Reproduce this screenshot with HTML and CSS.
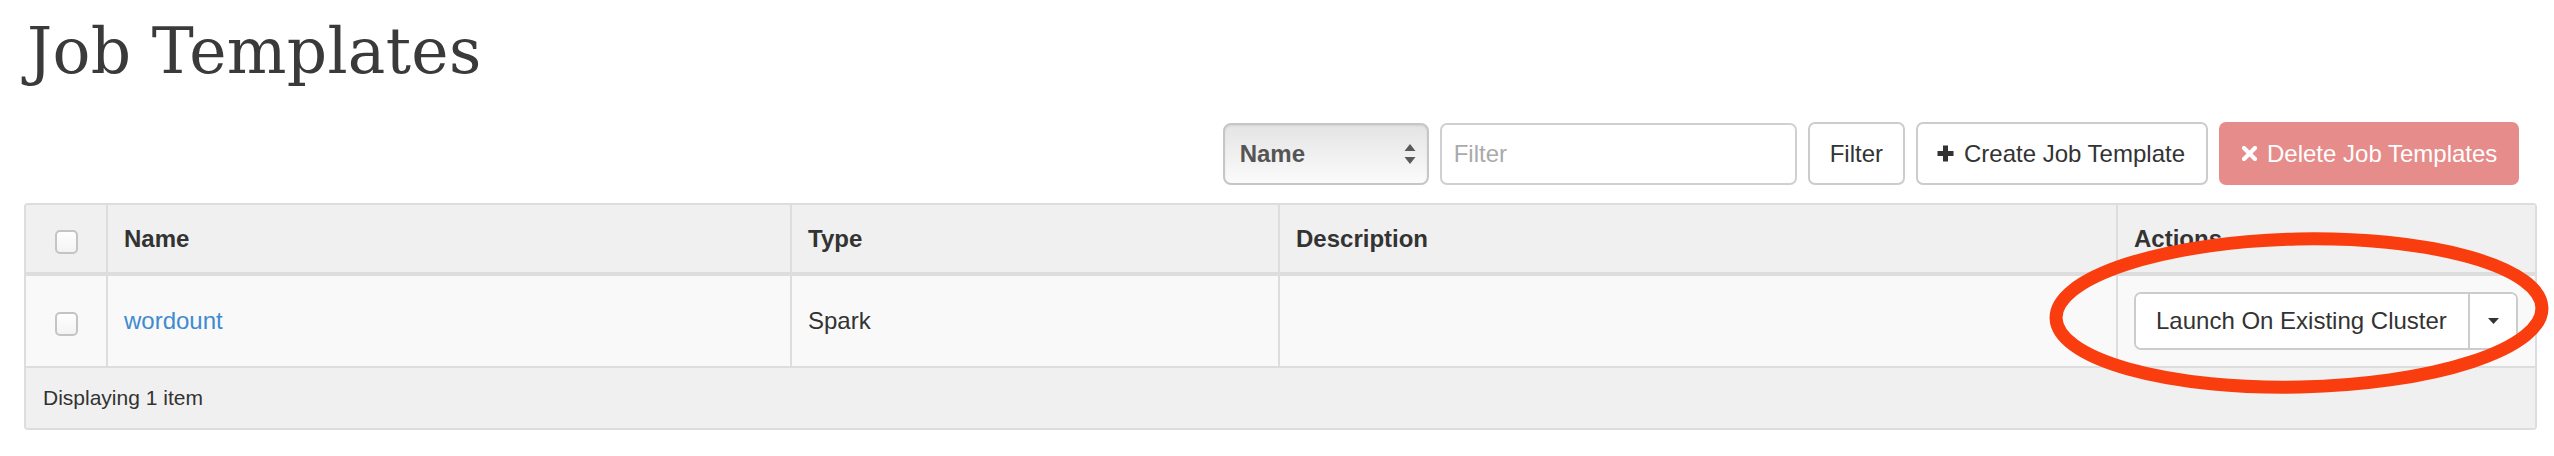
FILE: index.html
```html
<!DOCTYPE html>
<html lang="en">
<head>
<meta charset="utf-8">
<title>Job Templates</title>
<link rel="stylesheet" href="styles.css">
</head>
<body>
<div class="page">
  <h1 class="title">Job Templates</h1>

  <div class="toolbar">
    <div class="select">
      <span class="select-label">Name</span>
      <svg class="select-arrows" width="12" height="20" viewBox="0 0 12 20"><path d="M6 0 L11.5 7 L0.5 7 Z M0.5 13 L11.5 13 L6 20 Z" fill="#5a5a5a"/></svg>
    </div>
    <input class="filter-input" type="text" placeholder="Filter">
    <button class="btn btn-filter">Filter</button>
    <button class="btn btn-create">
      <svg class="icon" width="17" height="17" viewBox="0 0 17 17"><path d="M8.5 0.5 V16.5 M0.5 8.5 H16.5" stroke="#333" stroke-width="5"/></svg>
      <span>Create Job Template</span>
    </button>
    <button class="btn btn-delete">
      <svg class="icon" width="15" height="15" viewBox="0 0 15 15"><path d="M2 2 L13 13 M13 2 L2 13" stroke="#fff" stroke-width="4.2" stroke-linecap="round"/></svg>
      <span>Delete Job Templates</span>
    </button>
  </div>

  <div class="table">
    <div class="row head">
      <div class="cell c-check"><input class="check" type="checkbox"></div>
      <div class="cell">Name</div>
      <div class="cell">Type</div>
      <div class="cell">Description</div>
      <div class="cell last">Actions</div>
    </div>
    <div class="row body">
      <div class="cell c-check"><input class="check" type="checkbox"></div>
      <div class="cell"><a class="link" href="#">wordount</a></div>
      <div class="cell">Spark</div>
      <div class="cell"></div>
      <div class="cell last">
        <div class="btn-group">
          <button class="launch">Launch On Existing Cluster</button>
          <button class="caret-btn"><svg width="11" height="6" viewBox="0 0 11 6"><path d="M0 0 H11 L5.5 6 Z" fill="#333"/></svg></button>
        </div>
      </div>
    </div>
    <div class="foot">Displaying 1 item</div>
  </div>
</div>

<svg class="annotation" width="514" height="172" viewBox="0 0 514 172">
  <ellipse cx="259" cy="85" rx="243" ry="74" fill="none" stroke="#fa3d0e" stroke-width="13" transform="rotate(-1.2 259 85)"/>
</svg>
</body>
</html>
```

FILE: styles.css
```css
* { box-sizing: border-box; }

html, body {
  margin: 0;
  padding: 0;
  background: #fff;
}

body {
  font-family: "Liberation Sans", Arial, sans-serif;
  color: #333;
  width: 2554px;
  height: 456px;
  overflow: hidden;
}

.page {
  padding: 15px 17px 0 24px;
}

.title {
  margin: 0;
  padding-left: 3px;
  font-family: "DejaVu Serif", "Liberation Serif", serif;
  font-weight: 300;
  font-size: 63px;
  line-height: 74px;
  color: #3a3a3a;
  letter-spacing: 0.3px;
}

.toolbar {
  margin-top: 33px;
  display: flex;
  justify-content: flex-end;
  align-items: center;
  gap: 11px;
  padding-right: 18px;
  height: 63px;
}

.select {
  width: 206px;
  height: 62px;
  border: 2px solid #c6c6c6;
  border-radius: 8px;
  background: linear-gradient(#e4e4e4, #fbfbfb);
  box-shadow: inset 0 1px 2px rgba(0,0,0,0.08);
  display: flex;
  align-items: center;
  justify-content: space-between;
  padding: 0 11px 0 15px;
}

.select-label {
  font-weight: bold;
  font-size: 24px;
  color: #555;
}

.filter-input {
  width: 357px;
  height: 62px;
  border: 2px solid #d0d0d0;
  border-radius: 7px;
  padding: 0 12px;
  font-family: "Liberation Sans", Arial, sans-serif;
  font-size: 24px;
  color: #333;
  outline: none;
}

.filter-input::placeholder {
  color: #aaa;
}

.btn {
  height: 63px;
  border: 2px solid #ccc;
  border-radius: 7px;
  background: #fff;
  font-family: "Liberation Sans", Arial, sans-serif;
  font-size: 24px;
  color: #333;
  display: flex;
  align-items: center;
  padding: 0 20px;
}

.btn-create {
  padding: 0 21px 0 19px;
  gap: 10px;
}

.btn-delete {
  width: 300px;
  background: #e68c8b;
  border-color: #e68c8b;
  color: #fff;
  padding: 0 18px 0 21px;
  gap: 10px;
}

.icon { flex: none; }

.table {
  width: 2513px;
  margin-top: 18px;
  border: 2px solid #ddd;
  border-radius: 4px;
  overflow: hidden;
}

.row {
  display: grid;
  grid-template-columns: 82px 684px 488px 838px 1fr;
}

.row.head {
  height: 71px;
  background: #f0f0f0;
  border-bottom: 4px solid #ddd;
  font-weight: bold;
  font-size: 24px;
  color: #333;
}

.row.body {
  height: 92px;
  background: #f9f9f9;
  border-bottom: 2px solid #ddd;
  font-size: 24px;
  color: #333;
}

.cell {
  display: flex;
  align-items: center;
  padding: 0 16px;
  border-right: 2px solid #ddd;
}

.cell.last {
  border-right: none;
}

.c-check {
  justify-content: center;
  padding: 0;
}

.check {
  appearance: none;
  -webkit-appearance: none;
  width: 23px;
  height: 24px;
  margin: 6px 0 0 0;
  border: 2px solid #c4c4c4;
  border-radius: 5px;
  background: linear-gradient(#fff, #f3f3f3);
}

.link {
  color: #3f8bd0;
  text-decoration: none;
}

.btn-group {
  display: flex;
  height: 58px;
  border: 2px solid #ccc;
  border-radius: 7px;
  background: #fff;
  overflow: hidden;
}

.launch {
  border: none;
  background: #fff;
  font-family: "Liberation Sans", Arial, sans-serif;
  font-size: 24px;
  color: #333;
  padding: 0 21px 0 20px;
  border-right: 2px solid #ccc;
}

.caret-btn {
  width: 46px;
  border: none;
  background: #fff;
  display: flex;
  align-items: center;
  justify-content: center;
  padding: 0 0 0 1px;
}

.foot {
  height: 60px;
  background: #f0f0f0;
  display: flex;
  align-items: center;
  padding: 0 17px;
  font-size: 21px;
  color: #333;
}

.annotation {
  position: absolute;
  left: 2040px;
  top: 228px;
}
```
